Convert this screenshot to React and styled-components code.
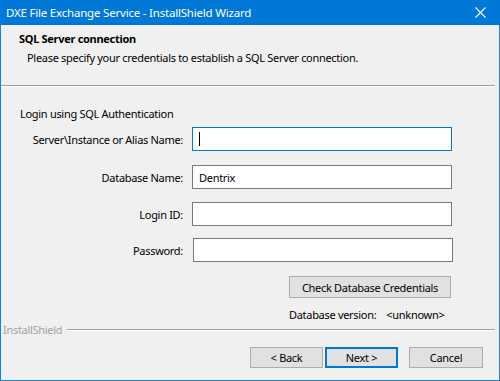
import React from 'react';
import styled, { createGlobalStyle } from 'styled-components';

const Global = createGlobalStyle`
  html, body { margin: 0; padding: 0; background: #f0f0f0; }
  * { box-sizing: border-box; }
`;

const Window = styled.div`
  width: 500px;
  height: 381px;
  border: 1px solid #1a82d9;
  border-top: none;
  background: #f0f0f0;
  display: flex;
  flex-direction: column;
  font-family: "Noto Sans", "Open Sans", sans-serif;
  font-size: 11px;
  letter-spacing: -0.3px;
  line-height: 15px;
  color: #000;
  & > * { flex-shrink: 0; }
`;

const TitleBar = styled.div`
  height: 25px;
  margin: 0 -1px;
  background: #0078d7;
  color: #fff;
  font-size: 11.5px;
  letter-spacing: -0.2px;
  display: flex;
  align-items: center;
  justify-content: space-between;
  padding: 0 14px 1px 6px;
`;

const Header = styled.div`
  height: 60px;
  padding: 6px 0 0 18px;
`;

const HeaderTitle = styled.div`
  font-weight: bold;
`;

const HeaderText = styled.div`
  margin: 4px 0 0 8px;
`;

const Rule = styled.div`
  height: 2px;
  margin-right: 4px;
  border-top: 1px solid #a0a0a0;
  border-bottom: 1px solid #fff;
`;

const Body = styled.div`
  height: 235px;
  padding: 19px 0 0 19px;
`;

const Row = styled.div`
  display: flex;
  align-items: center;
  margin-top: ${p => p.$top}px;
`;

const Label = styled.label`
  width: 163px;
  text-align: right;
  white-space: nowrap;
`;

const Field = styled.div`
  margin-left: ${p => p.$shift || 9}px;
  width: 260px;
  height: 24px;
  background: #fff;
  border: 1px solid ${p => (p.$focus ? '#0078d7' : '#7a7a7a')};
  padding: 0 6px;
  display: flex;
  align-items: center;
`;

const Caret = styled.span`
  display: inline-block;
  width: 1px;
  height: 14px;
  background: #000;
`;

const CheckRow = styled.div`
  display: flex;
  flex-direction: column;
  align-items: flex-start;
  margin: 14px 0 0 269px;
`;

const Button = styled.div`
  width: ${p => p.$w}px;
  height: ${p => p.$h || 21}px;
  margin-left: ${p => p.$gap || 0}px;
  background: #e1e1e1;
  border: ${p => (p.$default ? '2px solid #0078d7' : '1px solid #adadad')};
  display: flex;
  align-items: center;
  justify-content: center;
`;

const Version = styled.div`
  margin-top: 9px;
  display: flex;
  gap: 10px;
`;

const Brand = styled.div`
  display: flex;
  align-items: center;
  margin: 0 4px 0 2px;
  height: 15px;
`;

const BrandText = styled.span`
  color: #a3a3a3;
  margin-right: 5px;
`;

const BrandLine = styled.div`
  flex: 1;
  border-top: 1px solid #a0a0a0;
  border-bottom: 1px solid #fff;
`;

const Buttons = styled.div`
  display: flex;
  margin: 10px 0 0 249px;
`;

export default function App() {
  return (
    <>
      <Global />
      <Window>
        <TitleBar>
          <span>DXE File Exchange Service - InstallShield Wizard</span>
          <svg width="11" height="11" viewBox="0 0 11 11">
            <path d="M0.5 0.5 L10.5 10.5 M10.5 0.5 L0.5 10.5" stroke="#fff" strokeWidth="1.1" />
          </svg>
        </TitleBar>
        <Header>
          <HeaderTitle>SQL Server connection</HeaderTitle>
          <HeaderText>Please specify your credentials to establish a SQL Server connection.</HeaderText>
        </Header>
        <Rule />
        <Body>
          <div>Login using SQL Authentication</div>
          <Row $top={6}>
            <Label>Server\Instance or Alias Name:</Label>
            <Field $focus><Caret /></Field>
          </Row>
          <Row $top={14}>
            <Label>Database Name:</Label>
            <Field>Dentrix</Field>
          </Row>
          <Row $top={13}>
            <Label>Login ID:</Label>
            <Field />
          </Row>
          <Row $top={12}>
            <Label>Password:</Label>
            <Field $shift={10} />
          </Row>
          <CheckRow>
            <Button $w={162} $h={22}>Check Database Credentials</Button>
            <Version>
              <span>Database version:</span>
              <span>&lt;unknown&gt;</span>
            </Version>
          </CheckRow>
        </Body>
        <Brand>
          <BrandText>InstallShield</BrandText>
          <BrandLine />
        </Brand>
        <Buttons>
          <Button $w={73}>&lt; Back</Button>
          <Button $w={73} $gap={2} $default>Next &gt;</Button>
          <Button $w={74} $gap={11}>Cancel</Button>
        </Buttons>
      </Window>
    </>
  );
}
